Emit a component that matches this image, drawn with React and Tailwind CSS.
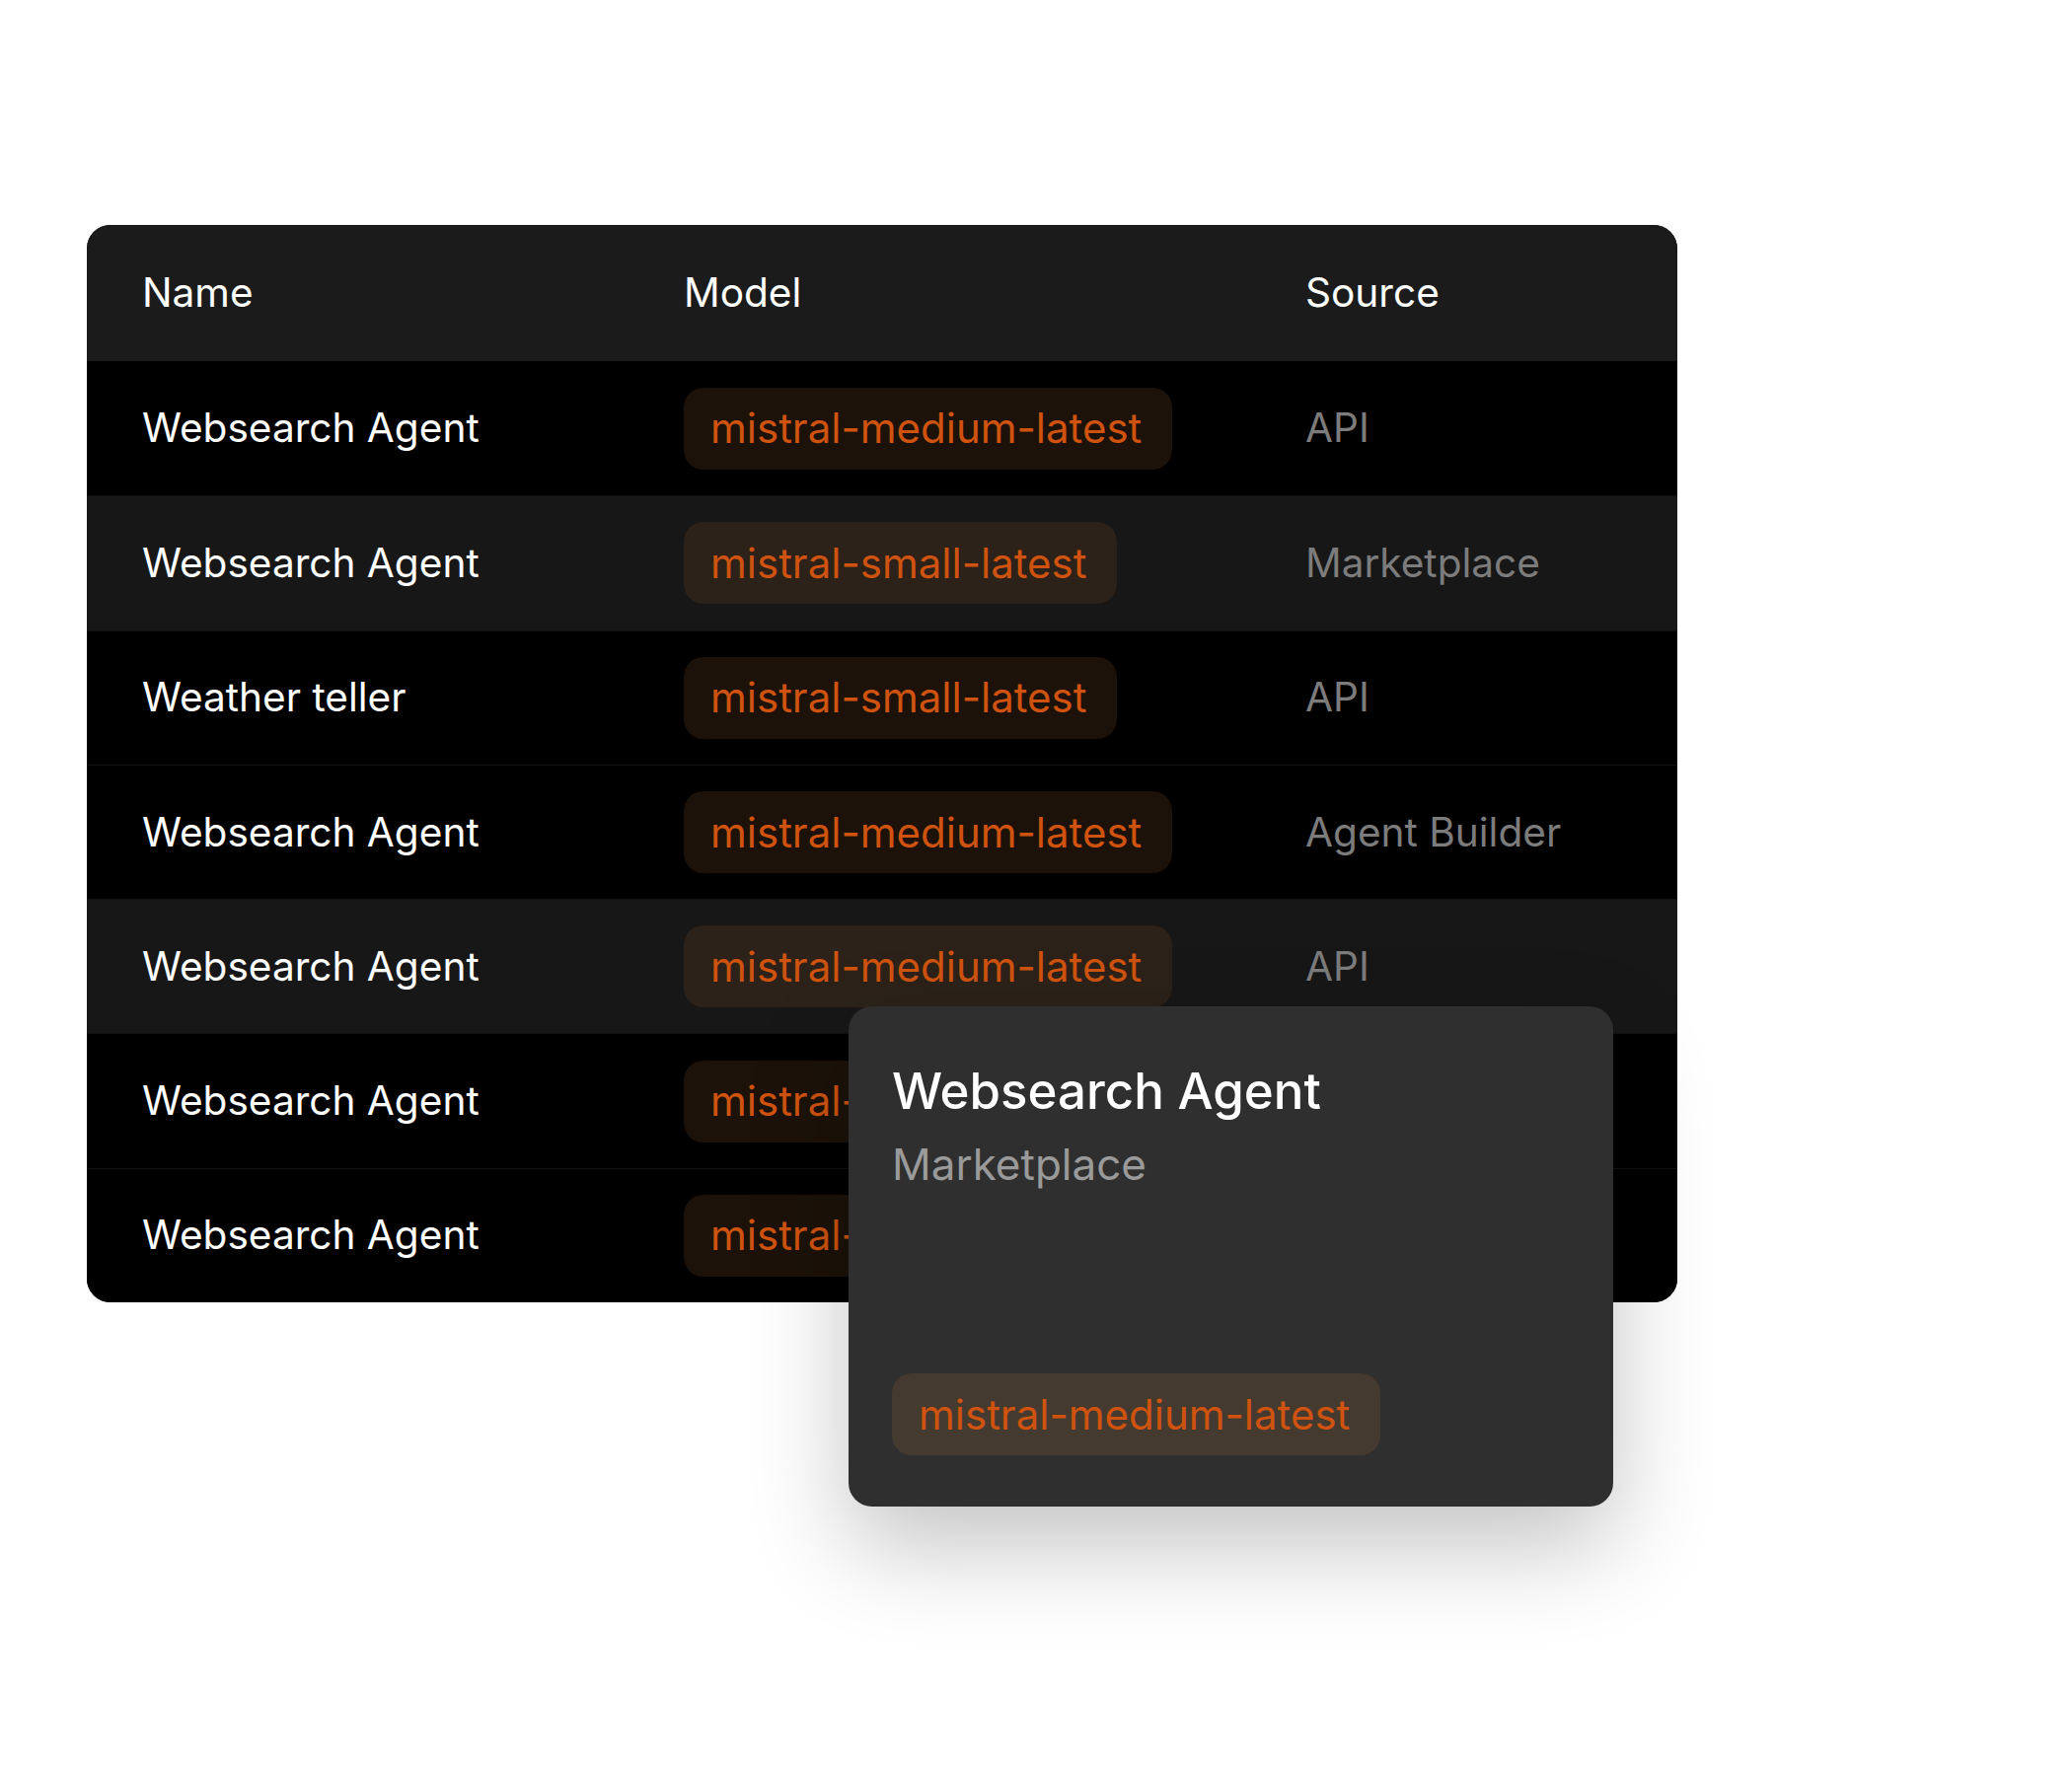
import React from "react";

const rows = [
  { name: "Websearch Agent", model: "mistral-medium-latest", source: "API", gray: false },
  { name: "Websearch Agent", model: "mistral-small-latest", source: "Marketplace", gray: true },
  { name: "Weather teller", model: "mistral-small-latest", source: "API", gray: false },
  { name: "Websearch Agent", model: "mistral-medium-latest", source: "Agent Builder", gray: false },
  { name: "Websearch Agent", model: "mistral-medium-latest", source: "API", gray: true },
  { name: "Websearch Agent", model: "mistral-medium-latest", source: "API", gray: false },
  { name: "Websearch Agent", model: "mistral-medium-latest", source: "Marketplace", gray: false },
];

function Pill({ children, gray }) {
  return (
    <span
      className={
        "inline-flex h-[83px] items-center rounded-[20px] pl-[27px] pr-[31px] text-[42px] leading-[60px] text-[#cf530f] " +
        (gray ? "bg-[#2c2219]" : "bg-[#1c1209]")
      }
    >
      {children}
    </span>
  );
}

export default function App() {
  return (
    <div
      className="min-h-[1792px] w-[2100px] bg-white pl-[88px] pt-[228px]"
      style={{ fontFamily: "Inter, 'Noto Sans', sans-serif" }}
    >
      <div className="relative w-[1612px]">
        <div className="overflow-hidden rounded-[24px] bg-black">
          <div className="grid h-[138px] grid-cols-[549px_630px_1fr] items-center bg-[#1b1b1b] pl-[56px] text-[40.6px] leading-[60px] text-white">
            <div>Name</div>
            <div>Model</div>
            <div>Source</div>
          </div>
          {rows.map((r, i) => (
            <div
              key={i}
              className={
                "grid h-[136.3px] grid-cols-[549px_630px_1fr] items-center pl-[56px] text-[40.6px] leading-[60px] " +
                (i > 0 ? "border-t border-[#111111] " : "") +
                (r.gray ? "bg-[#171717]" : "bg-black")
              }
            >
              <div className="text-white">{r.name}</div>
              <div>
                <Pill gray={r.gray}>{r.model}</Pill>
              </div>
              <div className="text-[#7c7c7c]">{r.source}</div>
            </div>
          ))}
        </div>

        <div className="absolute left-[772px] top-[792px] flex h-[507px] w-[775px] flex-col rounded-[24px] bg-[#2f2f2f] px-[44px] pb-[52px] pt-[56px] shadow-[0_40px_100px_rgba(0,0,0,0.24)]">
          <div className="text-[51px] font-medium leading-[60px] text-white">Websearch Agent</div>
          <div className="mt-[14px] text-[44px] leading-[60px] text-[#9a9a9a]">Marketplace</div>
          <div className="mt-auto">
            <span className="inline-flex h-[83px] items-center rounded-[20px] bg-[#453a2f] pl-[27px] pr-[31px] text-[42px] leading-[60px] text-[#cf530f]">
              mistral-medium-latest
            </span>
          </div>
        </div>
      </div>
    </div>
  );
}
